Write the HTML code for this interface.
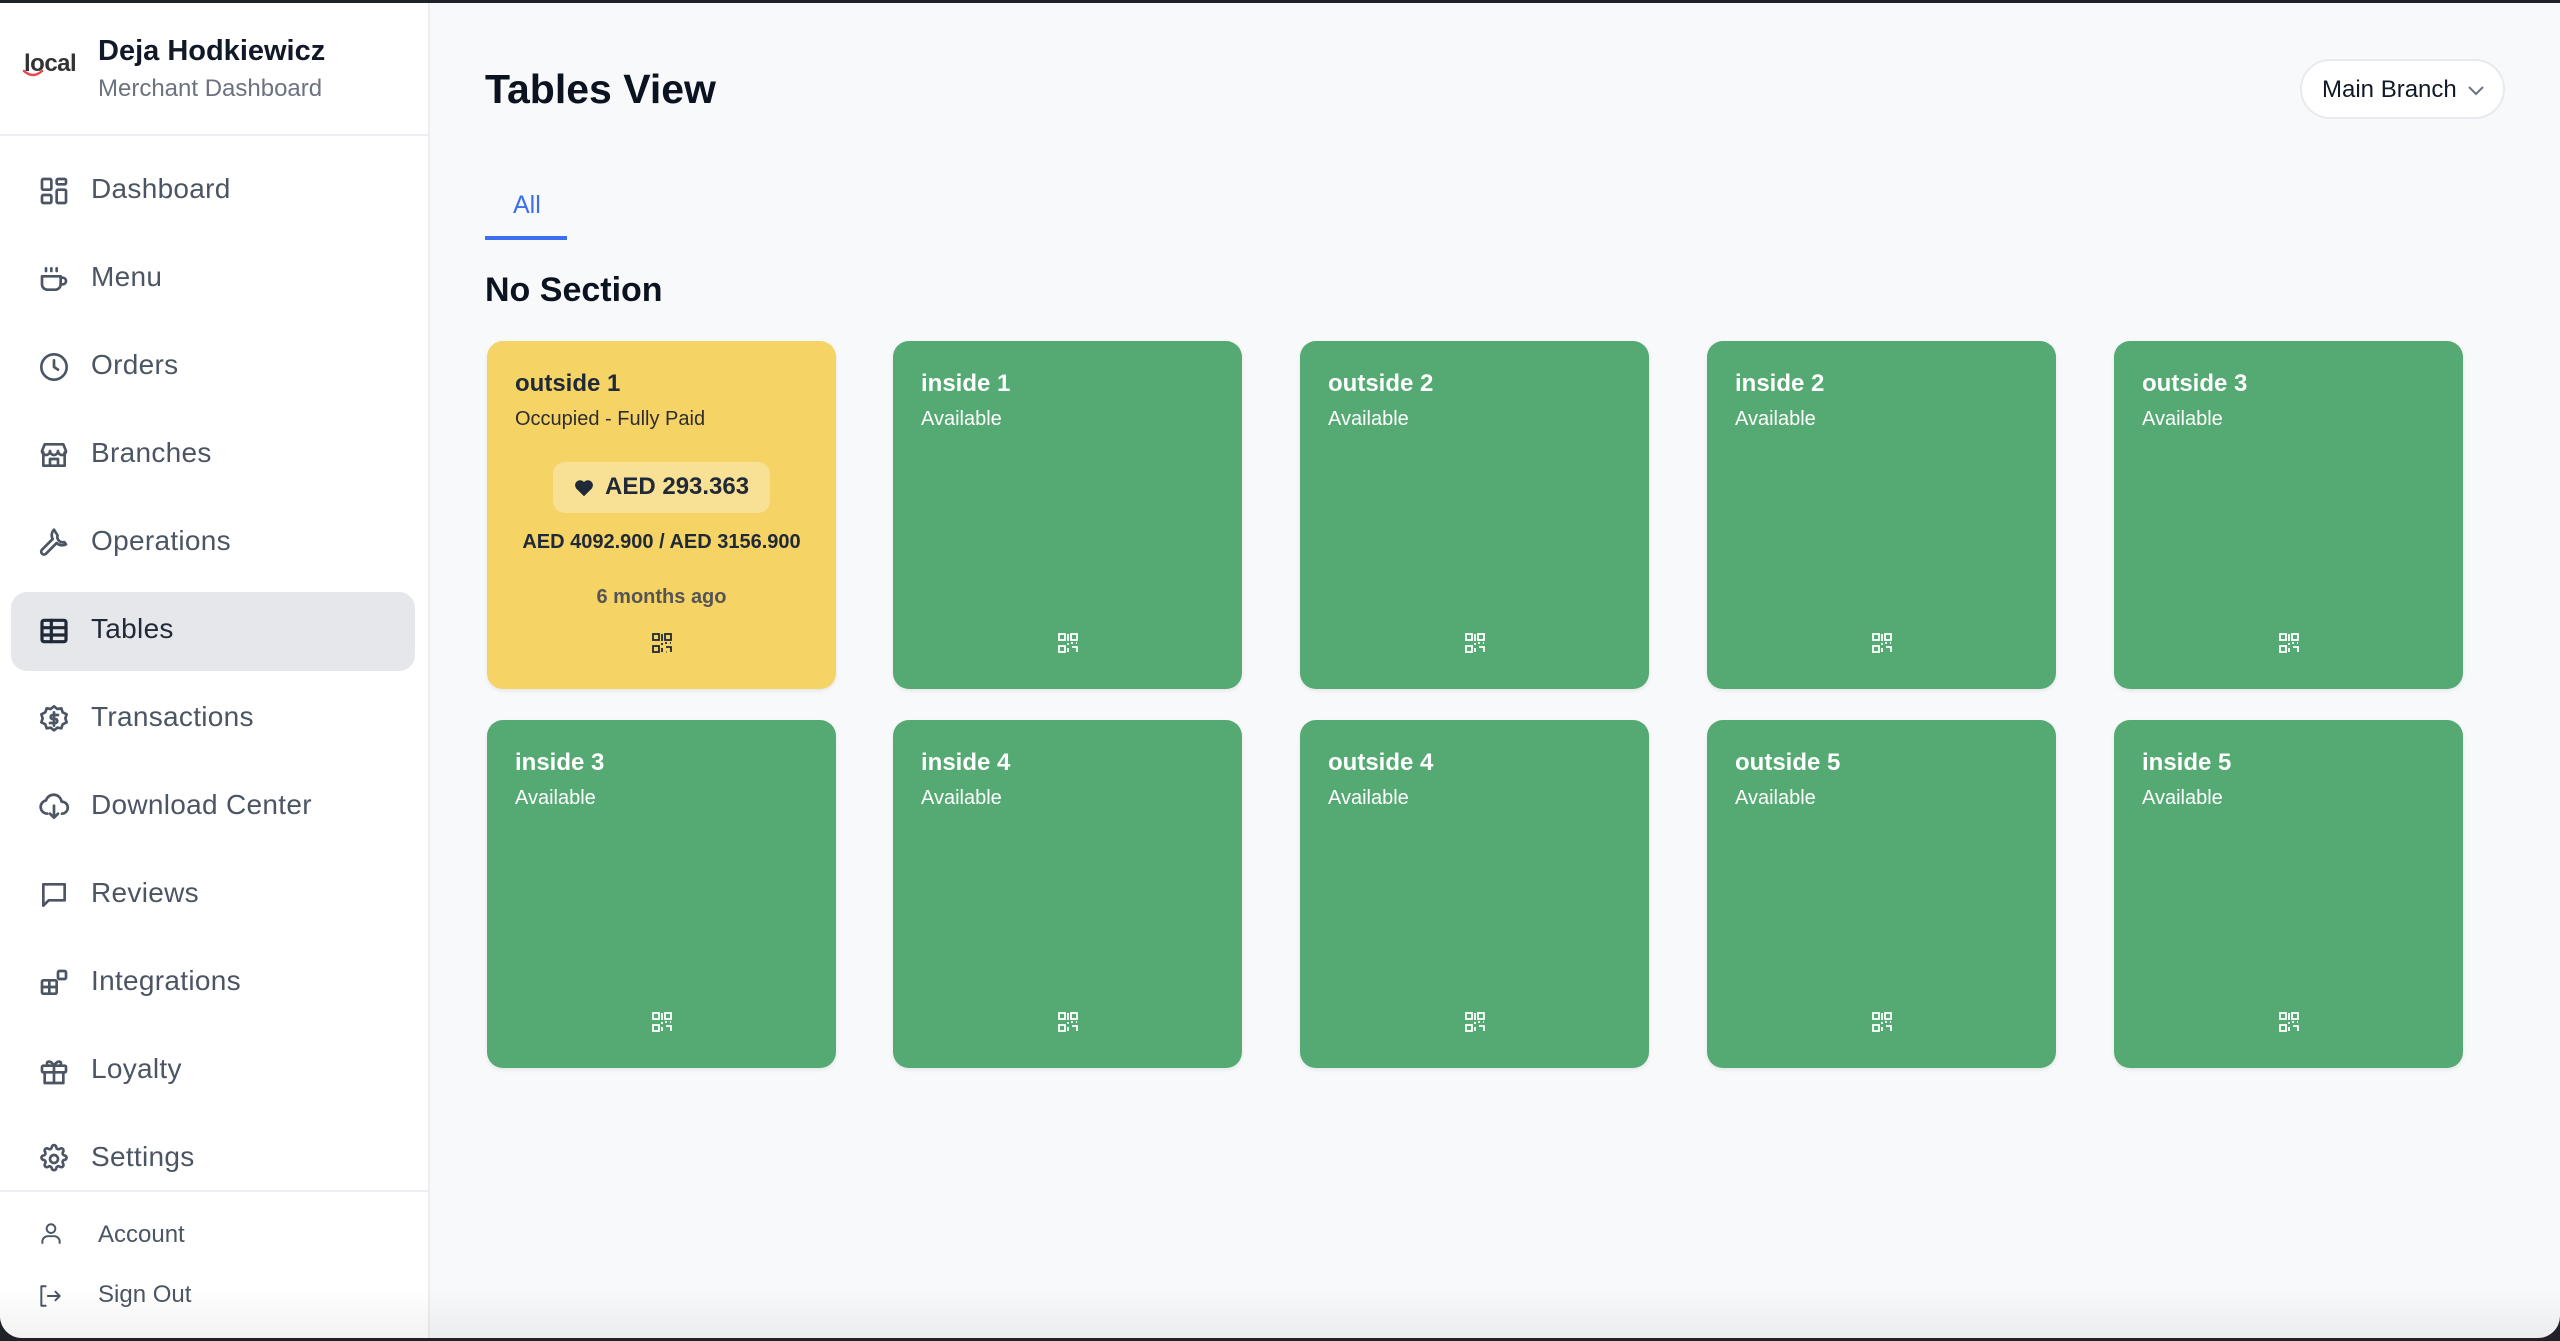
<!DOCTYPE html>
<html><head><meta charset="utf-8">
<style>
*{box-sizing:border-box;margin:0;padding:0}
html,body{width:2560px;height:1341px;overflow:hidden;background:#1f2328}
body{font-family:"Liberation Sans",sans-serif;position:relative}
#win{position:absolute;left:0;top:3px;width:2560px;height:1335px;background:#f8f9fb;border-radius:0 0 22px 22px;overflow:hidden}
#side{position:absolute;left:0;top:0;width:430px;height:1335px;background:#fff;border-right:2px solid #eceef1}
.abs{position:absolute}
.nav{position:absolute;left:0;width:430px;height:80px}
.nav svg{position:absolute;left:38px;top:24px;width:32px;height:32px;fill:none;stroke:#4b5563;stroke-width:2;stroke-linecap:round;stroke-linejoin:round}
.nav span{position:absolute;left:91px;top:22px;font-size:28px;color:#4b5563;letter-spacing:0.3px}
.card{position:absolute;width:349px;height:348px;border-radius:16px;background:#54aa72;color:#fff;box-shadow:0 2px 4px rgba(0,0,0,.08)}
.card .t{position:absolute;left:28px;top:29px;font-size:24px;font-weight:bold}
.card .s{position:absolute;left:28px;top:67px;font-size:20px}
.card .q{position:absolute;left:164px;top:291px;width:22px;height:22px}
.q rect{fill:none;stroke:currentColor;stroke-width:1.8}
</style></head><body>
<div id="win">
<div id="side">
  <div class="abs" style="left:24px;top:47px;font-size:24px;color:#333;letter-spacing:-0.5px;font-weight:bold">local</div>
  <svg class="abs" style="left:22px;top:66px" width="22" height="10"><path d="M2 2 Q11 10 20 2" stroke="#e5484d" stroke-width="2.5" fill="none" stroke-linecap="round"/></svg>
  <div class="abs" style="left:98px;top:32px;font-size:29px;font-weight:bold;color:#111827">Deja Hodkiewicz</div>
  <div class="abs" style="left:98px;top:72px;font-size:24px;color:#6b7280">Merchant Dashboard</div>
  <div class="abs" style="left:0;top:131px;width:430px;height:2px;background:#eceef1"></div>

  <div class="nav" style="top:148px"><svg viewBox="0 0 24 24"><rect x="3" y="3" width="7" height="8" rx="1"/><rect x="14" y="3" width="7" height="4" rx="1"/><rect x="3" y="15" width="7" height="6" rx="1"/><rect x="14" y="11" width="7" height="10" rx="1"/></svg><span>Dashboard</span></div>
  <div class="nav" style="top:236px"><svg viewBox="0 0 24 24"><path d="M3 10h14v6a4 4 0 0 1-4 4H7a4 4 0 0 1-4-4z"/><path d="M17 11h1.5a2.5 2.5 0 0 1 0 5H17"/><path d="M6 4v2M10 4v2M14 4v2"/></svg><span>Menu</span></div>
  <div class="nav" style="top:324px"><svg viewBox="0 0 24 24"><circle cx="12" cy="12" r="9.5"/><path d="M12 7v5l3 2"/></svg><span>Orders</span></div>
  <div class="nav" style="top:412px"><svg viewBox="0 0 24 24"><path d="M4 10v10h16V10"/><path d="M3 9l2-5h14l2 5a3 3 0 0 1-6 0 3 3 0 0 1-6 0 3 3 0 0 1-6 0z"/><path d="M9 20v-5h6v5"/></svg><span>Branches</span></div>
  <div class="nav" style="top:500px"><svg viewBox="0 0 24 24"><path d="M14.7 6.3a4 4 0 0 0 5 5L21 13a6 6 0 0 1-7-1l-8 8a2 2 0 0 1-3-3l8-8a6 6 0 0 1 1-7z"/></svg><span>Operations</span></div>
  <div class="abs" style="left:11px;top:589px;width:404px;height:79px;border-radius:16px;background:#e5e7eb"></div>
  <div class="nav" style="top:588px"><svg viewBox="0 0 24 24" style="stroke:#1f2937;stroke-width:2.4"><rect x="3" y="4" width="18" height="16" rx="1.5"/><path d="M3 9.5h18M3 15h18M10 4v16"/></svg><span style="color:#1f2937">Tables</span></div>
  <div class="nav" style="top:676px"><svg viewBox="0 0 24 24"><path d="M12 2.5l2.5 2 3-.5 1 3 3 1.5-1 3 1 3-3 1.5-1 3-3-.5-2.5 2-2.5-2-3 .5-1-3-3-1.5 1-3-1-3 3-1.5 1-3 3 .5z"/><path d="M15 9h-4a1.5 1.5 0 0 0 0 3h2a1.5 1.5 0 0 1 0 3H9M12 7v10"/></svg><span>Transactions</span></div>
  <div class="nav" style="top:764px"><svg viewBox="0 0 24 24"><path d="M7 17a5 5 0 0 1-1-9.9A6 6 0 0 1 17.7 8 4.5 4.5 0 0 1 18 17"/><path d="M12 11v9M9 17l3 3 3-3"/></svg><span>Download Center</span></div>
  <div class="nav" style="top:852px"><svg viewBox="0 0 24 24"><path d="M4 4h16v12H8l-4 4z"/></svg><span>Reviews</span></div>
  <div class="nav" style="top:940px"><svg viewBox="0 0 24 24"><rect x="3" y="10" width="11" height="10" rx="1"/><path d="M3 15h11M8.5 10v10"/><rect x="15" y="3" width="6" height="6" rx="1"/></svg><span>Integrations</span></div>
  <div class="nav" style="top:1028px"><svg viewBox="0 0 24 24"><rect x="3" y="8" width="18" height="5" rx="1"/><path d="M5 13v8h14v-8M12 8v13"/><path d="M12 8C9 3 5 5 7.5 8M12 8c3-5 7-3 4.5 0"/></svg><span>Loyalty</span></div>
  <div class="nav" style="top:1116px"><svg viewBox="0 0 24 24"><path d="M10.3 3.3a1.7 1.7 0 0 1 3.4 0 1.7 1.7 0 0 0 2.6 1.1 1.7 1.7 0 0 1 2.4 2.4 1.7 1.7 0 0 0 1 2.5 1.7 1.7 0 0 1 0 3.4 1.7 1.7 0 0 0-1 2.6 1.7 1.7 0 0 1-2.4 2.4 1.7 1.7 0 0 0-2.6 1 1.7 1.7 0 0 1-3.4 0 1.7 1.7 0 0 0-2.5-1 1.7 1.7 0 0 1-2.4-2.4 1.7 1.7 0 0 0-1.1-2.6 1.7 1.7 0 0 1 0-3.4 1.7 1.7 0 0 0 1.1-2.5 1.7 1.7 0 0 1 2.4-2.4 1.7 1.7 0 0 0 2.5-1.1z"/><circle cx="12" cy="12" r="3"/></svg><span>Settings</span></div>
  <div class="abs" style="left:0;top:1187px;width:430px;height:2px;background:#eceef1"></div>
  <svg class="abs" style="left:38px;top:1218px;fill:none;stroke:#4b5563;stroke-width:1.8" width="26" height="26" viewBox="0 0 24 24"><circle cx="12" cy="7" r="4"/><path d="M4 21v-2a5 5 0 0 1 5-5h6a5 5 0 0 1 5 5v2"/></svg>
  <div class="abs" style="left:98px;top:1218px;font-size:24px;color:#4b5563">Account</div>
  <svg class="abs" style="left:36px;top:1280px;fill:none;stroke:#4b5563;stroke-width:1.8;stroke-linecap:round;stroke-linejoin:round" width="28" height="26" viewBox="0 0 24 24"><path d="M8 3H4v18h4M10 12h11M17 8l4 4-4 4"/></svg>
  <div class="abs" style="left:98px;top:1278px;font-size:24px;color:#4b5563">Sign Out</div>
</div>

<div class="abs" style="left:485px;top:63px;font-size:41px;font-weight:bold;color:#0b1220">Tables View</div>
<div class="abs" style="left:2300px;top:56px;width:205px;height:60px;border-radius:30px;background:#fff;border:2px solid #e8eaee;font-size:24px;color:#111827">
  <span class="abs" style="left:20px;top:15px">Main Branch</span>
  <svg class="abs" style="left:165px;top:24px" width="18" height="12" viewBox="0 0 18 12"><path d="M2 2l7 7 7-7" fill="none" stroke="#6b7280" stroke-width="2"/></svg>
</div>
<div class="abs" style="left:513px;top:188px;font-size:25px;color:#3b6ef0">All</div>
<div class="abs" style="left:485px;top:233px;width:82px;height:4px;background:#3b6ef0"></div>
<div class="abs" style="left:485px;top:268px;font-size:34px;font-weight:bold;color:#0b1220">No Section</div>

<div class="card" style="left:487px;top:338px;background:#f6d365;color:#1f2937">
  <div class="t">outside 1</div>
  <div class="s" style="color:#2d2d2d">Occupied - Fully Paid</div>
  <div class="abs" style="left:66px;top:121px;width:217px;height:51px;border-radius:12px;background:#f8e094"></div>
  <svg class="abs" style="left:86px;top:136px" width="22" height="22" viewBox="0 0 24 24"><path d="M12 21l-8.5-8.5A5 5 0 0 1 12 5.5a5 5 0 0 1 8.5 7z" fill="#1f2937"/></svg>
  <div class="abs" style="left:118px;top:132px;font-size:24px;font-weight:bold">AED 293.363</div>
  <div class="abs" style="left:0;top:190px;width:349px;text-align:center;font-size:20px;font-weight:bold">AED 4092.900 / AED 3156.900</div>
  <div class="abs" style="left:0;top:245px;width:349px;text-align:center;font-size:20px;font-weight:bold;color:#555">6 months ago</div>
  <svg class="q" viewBox="0 0 22 22"><rect x="2" y="2" width="6" height="6"/><rect x="14" y="2" width="6" height="6"/><rect x="2" y="14" width="6" height="6"/><path d="M11 2v7M11 11v2M14 11h2M19 11h1M11 16v4M15 15h5v5M15 20h.5" stroke="currentColor" stroke-width="1.8" fill="none"/></svg>
</div>

<div class="card" style="left:893px;top:338px"><div class="t">inside 1</div><div class="s">Available</div><svg class="q" viewBox="0 0 22 22"><rect x="2" y="2" width="6" height="6"/><rect x="14" y="2" width="6" height="6"/><rect x="2" y="14" width="6" height="6"/><path d="M11 2v7M11 11v2M14 11h2M19 11h1M11 16v4M15 15h5v5" stroke="currentColor" stroke-width="1.8" fill="none"/></svg></div>
<div class="card" style="left:1300px;top:338px"><div class="t">outside 2</div><div class="s">Available</div><svg class="q" viewBox="0 0 22 22"><rect x="2" y="2" width="6" height="6"/><rect x="14" y="2" width="6" height="6"/><rect x="2" y="14" width="6" height="6"/><path d="M11 2v7M11 11v2M14 11h2M19 11h1M11 16v4M15 15h5v5" stroke="currentColor" stroke-width="1.8" fill="none"/></svg></div>
<div class="card" style="left:1707px;top:338px"><div class="t">inside 2</div><div class="s">Available</div><svg class="q" viewBox="0 0 22 22"><rect x="2" y="2" width="6" height="6"/><rect x="14" y="2" width="6" height="6"/><rect x="2" y="14" width="6" height="6"/><path d="M11 2v7M11 11v2M14 11h2M19 11h1M11 16v4M15 15h5v5" stroke="currentColor" stroke-width="1.8" fill="none"/></svg></div>
<div class="card" style="left:2114px;top:338px"><div class="t">outside 3</div><div class="s">Available</div><svg class="q" viewBox="0 0 22 22"><rect x="2" y="2" width="6" height="6"/><rect x="14" y="2" width="6" height="6"/><rect x="2" y="14" width="6" height="6"/><path d="M11 2v7M11 11v2M14 11h2M19 11h1M11 16v4M15 15h5v5" stroke="currentColor" stroke-width="1.8" fill="none"/></svg></div>

<div class="card" style="left:487px;top:717px"><div class="t">inside 3</div><div class="s">Available</div><svg class="q" viewBox="0 0 22 22"><rect x="2" y="2" width="6" height="6"/><rect x="14" y="2" width="6" height="6"/><rect x="2" y="14" width="6" height="6"/><path d="M11 2v7M11 11v2M14 11h2M19 11h1M11 16v4M15 15h5v5" stroke="currentColor" stroke-width="1.8" fill="none"/></svg></div>
<div class="card" style="left:893px;top:717px"><div class="t">inside 4</div><div class="s">Available</div><svg class="q" viewBox="0 0 22 22"><rect x="2" y="2" width="6" height="6"/><rect x="14" y="2" width="6" height="6"/><rect x="2" y="14" width="6" height="6"/><path d="M11 2v7M11 11v2M14 11h2M19 11h1M11 16v4M15 15h5v5" stroke="currentColor" stroke-width="1.8" fill="none"/></svg></div>
<div class="card" style="left:1300px;top:717px"><div class="t">outside 4</div><div class="s">Available</div><svg class="q" viewBox="0 0 22 22"><rect x="2" y="2" width="6" height="6"/><rect x="14" y="2" width="6" height="6"/><rect x="2" y="14" width="6" height="6"/><path d="M11 2v7M11 11v2M14 11h2M19 11h1M11 16v4M15 15h5v5" stroke="currentColor" stroke-width="1.8" fill="none"/></svg></div>
<div class="card" style="left:1707px;top:717px"><div class="t">outside 5</div><div class="s">Available</div><svg class="q" viewBox="0 0 22 22"><rect x="2" y="2" width="6" height="6"/><rect x="14" y="2" width="6" height="6"/><rect x="2" y="14" width="6" height="6"/><path d="M11 2v7M11 11v2M14 11h2M19 11h1M11 16v4M15 15h5v5" stroke="currentColor" stroke-width="1.8" fill="none"/></svg></div>
<div class="card" style="left:2114px;top:717px"><div class="t">inside 5</div><div class="s">Available</div><svg class="q" viewBox="0 0 22 22"><rect x="2" y="2" width="6" height="6"/><rect x="14" y="2" width="6" height="6"/><rect x="2" y="14" width="6" height="6"/><path d="M11 2v7M11 11v2M14 11h2M19 11h1M11 16v4M15 15h5v5" stroke="currentColor" stroke-width="1.8" fill="none"/></svg></div>

<div class="abs" style="left:0;top:1285px;width:2560px;height:50px;background:linear-gradient(rgba(0,0,0,0),rgba(0,0,0,.05))"></div>
</div>
</body></html>
